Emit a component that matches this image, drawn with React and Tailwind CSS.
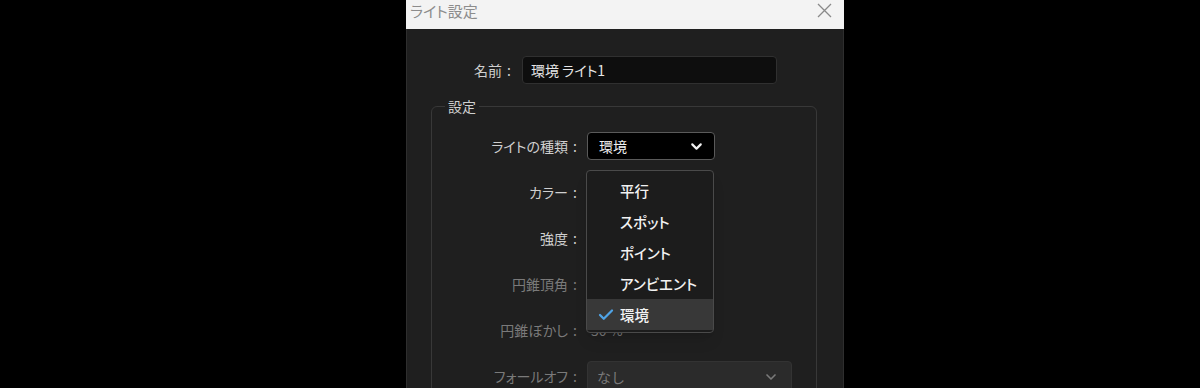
import { ChevronDown, Check } from "lucide-react";

const font = { fontFamily: '"Noto Sans CJK JP", "Noto Sans", sans-serif' };

const Label = ({ text, dim = false }) => (
  <div className={`flex items-center justify-end w-[150px] text-[14px] ${dim ? "text-[#7a7a7a]" : "text-[#cfcfcf]"}`}>
    <span className="[font-feature-settings:'palt']">{text}</span>
    <span className="w-[14px] text-center">:</span>
  </div>
);

const Row = ({ children }) => <div className="flex items-center h-[46px] gap-[5px]">{children}</div>;

const items = ["平行", "スポット", "ポイント", "アンビエント", "環境"];

export default function App() {
  return (
    <div className="w-[1200px] h-[388px] bg-black overflow-hidden pl-[406px]" style={font}>
      <div className="w-[438px] h-full flex flex-col">
        {/* title bar */}
        <div className="h-[29px] shrink-0 bg-[#f3f3f3] flex items-start justify-between pt-[1px] pl-[4px] pr-[12px]">
          <span className="text-[15px] leading-[20px] text-[#8c8c8c] [font-feature-settings:'palt']">ライト設定</span>
          <svg width="15" height="15" viewBox="0 0 15 15" className="mt-[2px]" aria-hidden="true">
            <path d="M1 1L14 14M14 1L1 14" stroke="#8a8a8a" strokeWidth="1.3" fill="none" />
          </svg>
        </div>

        {/* body */}
        <div className="flex-1 min-h-0 bg-[#1f1f1f] border-x border-[#2e2e2e] pt-[27px] pl-[24px] pr-[26px] relative">
          <div className="flex items-center h-[28px]">
            <div className="flex items-center justify-end w-[85px] text-[14px] text-[#cfcfcf]">
              <span>名前</span>
              <span className="w-[14px] text-center">:</span>
            </div>
            <div className="ml-[6px] w-[255px] h-[28px] rounded-[4px] bg-[#0e0e0e] border border-[#303030] flex items-center pl-[8px] text-[14px] text-[#e6e6e6] [font-feature-settings:'palt']">
              環境 ライト1
            </div>
          </div>

          <fieldset className="mt-[12px] border border-[#383838] rounded-[6px] pt-[6px] h-[300px]">
            <legend className="ml-[13px] px-[3px] text-[14px] text-[#cfcfcf]">設定</legend>

            <Row>
              <Label text="ライトの種類" />
              <div className="w-[128px] h-[28px] rounded-[4px] bg-black border border-[#5a5a5a] flex items-center justify-between pl-[11px] pr-[9px] text-[14px] text-[#f0f0f0]">
                <span>環境</span>
                <ChevronDown size={17} strokeWidth={3} color="#f2f2f2" />
              </div>
            </Row>
            <Row>
              <Label text="カラー" />
            </Row>
            <Row>
              <Label text="強度" />
            </Row>
            <Row>
              <Label text="円錐頂角" dim />
            </Row>
            <Row>
              <Label text="円錐ぼかし" dim />
              <span className="pl-[4px] text-[14px] text-[#7a7a7a]">50 %</span>
            </Row>
            <Row>
              <Label text="フォールオフ" dim />
              <div className="w-[205px] h-[32px] rounded-[4px] bg-[#2b2b2b] border border-[#333] flex items-center justify-between pl-[9px] pr-[12px] text-[14px] text-[#7a7a7a] mt-[2px]">
                <span>なし</span>
                <ChevronDown size={16} strokeWidth={2.5} color="#7a7a7a" />
              </div>
            </Row>
          </fieldset>

          {/* dropdown menu */}
          <div className="absolute left-[179px] top-[141px] w-[128px] h-[163px] rounded-[4px] bg-[#1c1c1c] border border-[#4a4a4a] pt-[4px] shadow-lg">
            {items.map((it) => {
              const sel = it === "環境";
              return (
                <div
                  key={it}
                  className={`h-[31px] flex items-center text-[14.5px] font-medium text-[#f2f2f2] [font-feature-settings:'palt'] ${sel ? "bg-[#383838]" : ""}`}
                >
                  <span className="w-[33px] flex justify-center pl-[5px]">
                    {sel && <Check size={18} strokeWidth={3} color="#4fa3e6" />}
                  </span>
                  <span>{it}</span>
                </div>
              );
            })}
          </div>
        </div>
      </div>
    </div>
  );
}
